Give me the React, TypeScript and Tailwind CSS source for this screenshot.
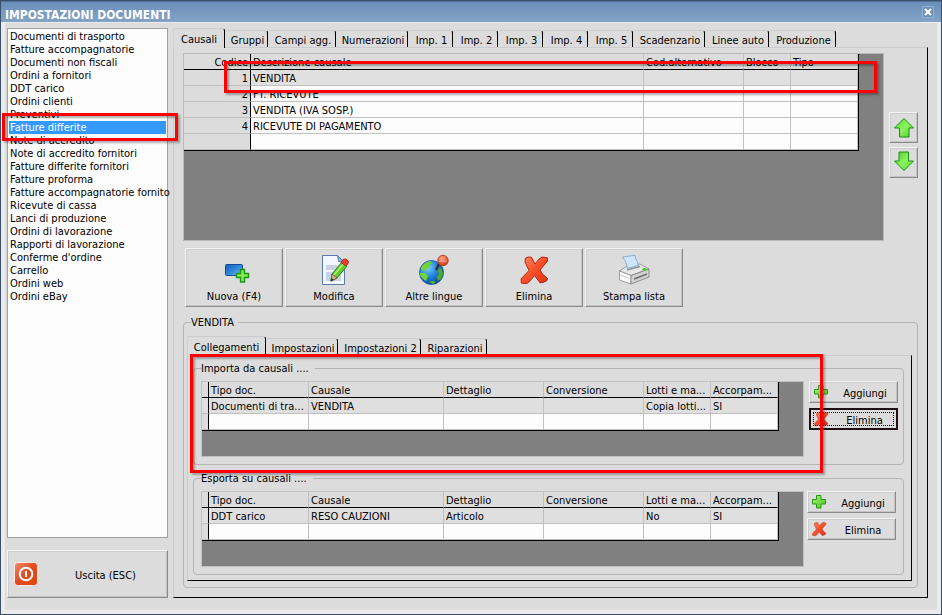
import { useState } from 'react';
import type { ReactNode } from 'react';
import { clsx } from 'clsx';

const documentTypes = [
  'Documenti di trasporto',
  'Fatture accompagnatorie',
  'Documenti non fiscali',
  'Ordini a fornitori',
  'DDT carico',
  'Ordini clienti',
  'Preventivi',
  'Fatture differite',
  'Note di accredito',
  'Note di accredito fornitori',
  'Fatture differite fornitori',
  'Fatture proforma',
  'Fatture accompagnatorie fornito',
  'Ricevute di cassa',
  'Lanci di produzione',
  'Ordini di lavorazione',
  'Rapporti di lavorazione',
  "Conferme d'ordine",
  'Carrello',
  'Ordini web',
  'Ordini eBay',
];

const mainTabs = [
  { label: 'Causali', width: 'w-[52px]' },
  { label: 'Gruppi', width: 'w-[43px]' },
  { label: 'Campi agg.', width: 'w-[68px]' },
  { label: 'Numerazioni', width: 'w-[72px]' },
  { label: 'Imp. 1', width: 'w-[45px]' },
  { label: 'Imp. 2', width: 'w-[45px]' },
  { label: 'Imp. 3', width: 'w-[45px]' },
  { label: 'Imp. 4', width: 'w-[45px]' },
  { label: 'Imp. 5', width: 'w-[45px]' },
  { label: 'Scadenzario', width: 'w-[72px]' },
  { label: 'Linee auto', width: 'w-[64px]' },
  { label: 'Produzione', width: 'w-[67px]' },
];

const detailTabs = [
  { label: 'Collegamenti', width: 'w-[79px]' },
  { label: 'Impostazioni', width: 'w-[72px]' },
  { label: 'Impostazioni 2', width: 'w-[83px]' },
  { label: 'Riparazioni', width: 'w-[66px]' },
];

const causali = [
  { code: '1', name: 'VENDITA' },
  { code: '2', name: 'FT. RICEVUTE' },
  { code: '3', name: 'VENDITA (IVA SOSP.)' },
  { code: '4', name: 'RICEVUTE DI PAGAMENTO' },
  { code: '', name: '' },
];

const linkColumns = [
  { label: 'Tipo doc.', width: 'w-[100px]' },
  { label: 'Causale', width: 'w-[135px]' },
  { label: 'Dettaglio', width: 'w-[100px]' },
  { label: 'Conversione', width: 'w-[100px]' },
  { label: 'Lotti e ma...', width: 'w-[67px]' },
  { label: 'Accorpam...', width: 'w-[67px]' },
];

const raised =
  'border border-t-[#f4f4f4] border-l-[#f4f4f4] border-r-[#8a8a8a] border-b-[#8a8a8a] bg-[#dcdcdc] shadow-[inset_1px_1px_0_#cdcdd0,inset_-1px_-1px_0_#c4c4c4]';
const cell =
  'h-4 overflow-hidden border-r border-b border-[#c0c0c0] p-0 pt-0.5 pl-0.5 text-left font-normal whitespace-nowrap';

function Highlight({ className }: { className: string }) {
  return (
    <div
      className={clsx(
        'pointer-events-none absolute z-10 border-3 border-[#ff0000] shadow-[2px_2px_2px_rgba(0,0,0,0.3),inset_2px_2px_2px_rgba(0,0,0,0.3)]',
        className,
      )}
    />
  );
}

function Tabs({
  tabs,
  label,
}: {
  tabs: { label: string; width: string }[];
  label: string;
}) {
  const [active, setActive] = useState(0);

  return (
    <div role="tablist" aria-label={label} className="flex h-5 items-end">
      {tabs.map((tab, index) => (
        <button
          key={tab.label}
          type="button"
          role="tab"
          aria-selected={index === active}
          onClick={() => setActive(index)}
          className={clsx(
            'shrink-0 rounded-t-[3px] border-t border-r border-t-[#cbcbd0] border-r-black text-center whitespace-nowrap',
            tab.width,
            index === active
              ? 'relative h-5 border-l border-l-[#d0d0d4] bg-[#dcdcdc] pt-px'
              : 'mb-px h-[17px] pt-0.5 pl-[3px]',
          )}
        >
          {tab.label}
        </button>
      ))}
    </div>
  );
}

function PlusIcon() {
  return (
    <svg viewBox="0 0 16 16" className="size-4 shrink-0">
      <defs>
        <linearGradient id="plus" x1="0" y1="0" x2="1" y2="1">
          <stop offset="0" stopColor="#b4f27c" />
          <stop offset="1" stopColor="#3fc41c" />
        </linearGradient>
      </defs>
      <path
        d="M5.500 1.500h4.500v4h4.500v4.500h-4.500v4h-4.500v-4h-4v-4.500h4z"
        fill="url(#plus)"
        stroke="#259a14"
      />
    </svg>
  );
}

function CrossIcon({ className }: { className: string }) {
  return (
    <svg viewBox="0 0 32 32" className={clsx('shrink-0', className)}>
      <defs>
        <linearGradient id="cross" x1="0" y1="0" x2="1" y2="1">
          <stop offset="0" stopColor="#ff8a5c" />
          <stop offset="0.5" stopColor="#f8502a" />
          <stop offset="1" stopColor="#dc2f10" />
        </linearGradient>
      </defs>
      <path
        d="M7.500 4l3-1 3 .3 3.500 6.700 4-5 3-2 5.500.8v3.200l-7.500 9 2.500 4 5 4.500-.5 2-4 2-3 .3-5.500-7.300-5 6-2.500 2-5.500-.3-.5-4.200 8-8.500-4-8.500z"
        fill="url(#cross)"
        stroke="#b8240c"
        strokeLinejoin="round"
      />
    </svg>
  );
}

function NewIcon() {
  return (
    <svg viewBox="0 0 32 32" className="size-8">
      <defs>
        <linearGradient id="screen" x1="0" y1="0" x2="1" y2="1">
          <stop offset="0" stopColor="#1260b8" />
          <stop offset="0.5" stopColor="#2f86dc" />
          <stop offset="1" stopColor="#8cc4f4" />
        </linearGradient>
      </defs>
      <rect x="7.500" y="10.500" width="17" height="11" rx="1" fill="url(#screen)" stroke="#174a96" />
      <path
        d="M22.500 15.500h4v4h4v4h-4v4.500h-4v-4.500h-4v-4h4z"
        fill="#8ee650"
        stroke="#139a14"
        strokeWidth="1.400"
      />
    </svg>
  );
}

function EditIcon() {
  return (
    <svg viewBox="0 0 32 32" className="size-8">
      <path d="M4.500 1.500h15l7 7v22h-22z" fill="#f4f8fe" stroke="#5a7cac" />
      <path d="M8 11h15v5H8zM8 18h15v9H8z" fill="#c6d2e8" />
      <path d="M19.500 1.500l1 6 6 1z" fill="#7fb0e4" stroke="#4a78b4" strokeWidth="0.800" />
      <path d="M14 20l10-12 5 4-10 12-6 3z" fill="#5fce2c" stroke="#2f7e18" />
      <path d="M16 21l10-12" stroke="#b4f07c" strokeWidth="1.500" />
      <path d="M14 20l5 4-6 3z" fill="#d8b888" stroke="#6b5434" strokeWidth="0.800" />
      <path d="M13.500 24l2.500 2-3.500 1.500z" fill="#333" />
      <path d="M23 8.500l2-3 3-.5 2.500 2.500-.5 2-2 2.500z" fill="#e8402c" stroke="#b02818" />
    </svg>
  );
}

function GlobeIcon() {
  return (
    <svg viewBox="0 0 32 32" className="size-8">
      <defs>
        <radialGradient id="sea" cx="0.35" cy="0.3" r="0.75">
          <stop offset="0" stopColor="#7cccf8" />
          <stop offset="0.5" stopColor="#2688dc" />
          <stop offset="1" stopColor="#0c4490" />
        </radialGradient>
        <radialGradient id="pin" cx="0.4" cy="0.3" r="0.7">
          <stop offset="0" stopColor="#ffa888" />
          <stop offset="1" stopColor="#d43a18" />
        </radialGradient>
      </defs>
      <circle cx="13.500" cy="18.500" r="12" fill="url(#sea)" stroke="#16509c" strokeWidth="0.800" />
      <path d="M3 14c2-4 6-6 9-7l2 2-3 2 1 2-4 2-1 2-4-1z" fill="#74d62c" />
      <path d="M2 19l5 0 3 3-2 5c-3-2-6-4-6-8z" fill="#74d62c" />
      <path d="M22 13l2 3 1 4-2 5-3 2-1-4 2-3-1-3z" fill="#4cae20" />
      <path d="M11 28l4-1 3 1-3 2z" fill="#5cc024" />
      <path d="M18 16l3-6" stroke="#30343a" strokeWidth="2.500" />
      <circle cx="25" cy="6.500" r="5.200" fill="url(#pin)" stroke="#a83218" strokeWidth="0.800" />
      <path d="M21 7h8" stroke="#ffc0a4" strokeWidth="0.700" />
    </svg>
  );
}

function PrinterIcon() {
  return (
    <svg viewBox="0 0 32 32" className="size-8">
      <path d="M1.500 17l7-4.500 13.500-2.500 9 5-18 6.500z" fill="#e8e8e8" stroke="#8a8a8a" strokeWidth="0.800" />
      <path d="M9 16l13-3.500" stroke="#8d9196" strokeWidth="1.500" />
      <path d="M4.500 3l12.500-1.700c0 4 3 6 3.500 10.200l-11.500 3c0-5-1.500-8-4.500-11.500z" fill="#cfe5fb" stroke="#7a9cc4" strokeWidth="0.800" />
      <path d="M1.500 17l11.500 4.500v8.500l-11.500-4z" fill="#fafafa" stroke="#8a8a8a" strokeWidth="0.800" />
      <path d="M13 21.500l18-6.500v8l-18 7z" fill="#d2d2d2" stroke="#7a7a7a" strokeWidth="0.800" />
      <path d="M16 25l13-5" stroke="#6d6d6d" strokeWidth="1.500" />
      <path d="M2 21l11 4" stroke="#c8c8c8" />
      <ellipse cx="26.500" cy="15.500" rx="2.200" ry="1.400" fill="#4cc82c" />
    </svg>
  );
}

function ArrowIcon({ down = false }: { down?: boolean }) {
  return (
    <svg viewBox="0 0 22 22" className={clsx('size-[22px]', down && 'rotate-180')}>
      <defs>
        <linearGradient id="arrow" x1="0" y1="0" x2="1" y2="1">
          <stop offset="0" stopColor="#5ed43c" />
          <stop offset="0.5" stopColor="#8af45c" />
          <stop offset="1" stopColor="#4cc82c" />
        </linearGradient>
      </defs>
      <path
        d="M11 1.500l9.500 9.500h-4.500v9H6.500v-9H1.500z"
        fill="url(#arrow)"
        stroke="#1d8c14"
        strokeLinejoin="round"
      />
    </svg>
  );
}

function PowerIcon() {
  return (
    <svg viewBox="0 0 24 24" className="size-6">
      <defs>
        <linearGradient id="power" x1="0" y1="0" x2="1" y2="1">
          <stop offset="0" stopColor="#f48c70" />
          <stop offset="0.5" stopColor="#e04a20" />
          <stop offset="1" stopColor="#dc4808" />
        </linearGradient>
      </defs>
      <rect x="0.500" y="0.500" width="23" height="23" rx="3" fill="url(#power)" stroke="#fbeae4" />
      <circle cx="12" cy="12" r="6.300" fill="none" stroke="#fff" strokeWidth="2" />
      <path d="M12 9v6" stroke="#fff" strokeWidth="2" />
    </svg>
  );
}

function ToolButton({ label, children }: { label: string; children: ReactNode }) {
  return (
    <button
      type="button"
      className={clsx('flex h-[59px] w-[98px] flex-col items-center gap-1 pt-[5px]', raised)}
    >
      {children}
      {label}
    </button>
  );
}

function CausaliTable() {
  return (
    <div className="relative h-[188px] flex-1 border border-[#b8b8b8] bg-[#808080]">
      <table className="w-[675px] table-fixed border-separate border-spacing-0 border-r border-b border-black">
        <thead className="bg-[#dcdcdc]">
          <tr>
            <th scope="col" className={clsx(cell, 'w-[67px] border-r-black border-b-black pr-0.5 text-right')}>
              Codice
            </th>
            <th scope="col" className={clsx(cell, 'w-[393px] border-b-black')}>Descrizione causale</th>
            <th scope="col" className={clsx(cell, 'w-[100px] border-b-black')}>Cod.alternativo</th>
            <th scope="col" className={clsx(cell, 'w-[47px] border-b-black')}>Blocco</th>
            <th scope="col" className={clsx(cell, 'w-[67px] border-b-black')}>Tipo</th>
          </tr>
        </thead>
        <tbody>
          {causali.map((row, index) => (
            <tr key={index} className={index === 0 ? 'bg-[#e0e0e0]' : 'bg-[#fcfcfc]'}>
              <th scope="row" className={clsx(cell, 'border-r-black bg-[#dcdcdc] pr-0.5 text-right')}>
                {row.code}
              </th>
              <td className={cell}>{row.name}</td>
              <td className={cell} />
              <td className={cell} />
              <td className={cell} />
            </tr>
          ))}
        </tbody>
      </table>
      <Highlight className="top-[7px] left-10 h-8 w-[653px]" />
    </div>
  );
}

function LinksTable({ row }: { row: string[] }) {
  return (
    <div className="h-[76px] flex-1 border border-[#c0c0c0] bg-[#808080]">
      <table className="w-[577px] table-fixed border-separate border-spacing-0 border-r border-b border-black">
        <thead className="bg-[#dcdcdc]">
          <tr>
            <td className={clsx(cell, 'w-[7px] border-r-black border-b-black')} />
            {linkColumns.map((column) => (
              <th key={column.label} scope="col" className={clsx(cell, column.width, 'border-b-black')}>
                {column.label}
              </th>
            ))}
          </tr>
        </thead>
        <tbody>
          <tr className="bg-[#e0dfe0]">
            <td className={clsx(cell, 'border-r-black')} />
            {row.map((value, index) => (
              <td key={index} className={cell}>{value}</td>
            ))}
          </tr>
          <tr className="bg-[#fcfcfc]">
            <td className={clsx(cell, 'border-r-black bg-[#dcdcdc]')} />
            {row.map((_, index) => (
              <td key={index} className={cell} />
            ))}
          </tr>
        </tbody>
      </table>
    </div>
  );
}

function LinksGroup({
  title,
  row,
  focused = false,
}: {
  title: string;
  row: string[];
  focused?: boolean;
}) {
  return (
    <fieldset className="relative min-w-0 rounded-[4px] border border-[#b4b4b4] px-[7px] pb-[7px]">
      <legend className="h-3.5 pr-1.5 leading-4">{title}</legend>
      <div className={clsx('flex pt-1.5', focused ? '-mr-0.5 gap-[5px]' : 'gap-[3px]')}>
        <LinksTable row={row} />
        <div className="flex w-[89px] flex-col gap-[5px]">
          <button type="button" className={clsx('flex h-[22px] items-center pl-[3px]', raised)}>
            <PlusIcon />
            <span className="flex-1 pt-0.5 pl-1">Aggiungi</span>
          </button>
          <button
            type="button"
            className={clsx(
              'relative flex h-[22px] items-center',
              focused ? 'border-2 border-[#1c1014] bg-[#dcdcdc] pl-0.5' : ['pl-[3px]', raised],
            )}
          >
            <CrossIcon className="size-4" />
            <span className="flex-1 pt-0.5 pl-1">Elimina</span>
            {focused && <span className="absolute inset-0.5 border border-dotted border-black" />}
          </button>
        </div>
      </div>
      {focused && <Highlight className="-top-[21px] -left-1 h-[119px] w-[633px]" />}
    </fieldset>
  );
}

function Sidebar() {
  const [selected, setSelected] = useState('Fatture differite');

  return (
    <div className="flex w-[161px] shrink-0 flex-col gap-3 pt-[5px]">
      <ul className="flex-1 border border-[#a0a0a0] bg-[#fcfcfc] p-px">
        {documentTypes.map((name) => (
          <li key={name} className="relative">
            <button
              type="button"
              aria-pressed={name === selected}
              onClick={() => setSelected(name)}
              className={clsx(
                'block h-[13px] w-full pl-px text-left whitespace-nowrap',
                name === selected && 'bg-[#3399ff] text-white',
              )}
            >
              {name}
            </button>
            {name === 'Fatture differite' && (
              <Highlight className="-top-2 -left-[7px] h-7 w-44" />
            )}
          </li>
        ))}
      </ul>
      <button type="button" className={clsx('flex h-12 items-center pl-1.5', raised)}>
        <PowerIcon />
        <span className="flex-1 pt-0.5 pr-1.5 pl-3">Uscita (ESC)</span>
      </button>
    </div>
  );
}

export default function App() {
  return (
    <div className="flex min-h-screen flex-col border border-[#3a4f68] bg-[#dcdcdc] font-['Tahoma','DejaVu_Sans_Condensed','DejaVu_Sans',sans-serif] text-[11px] leading-[13px] text-black">
      <header className="flex h-[21px] items-center justify-between border-t border-[#4f719a] bg-linear-to-b from-[#6a8fba] to-[#84a3c6] pr-[7px] pl-1 text-white">
        <h1 className="pt-1.5 text-[12px] font-bold">IMPOSTAZIONI DOCUMENTI</h1>
        <button
          type="button"
          aria-label="Chiudi"
          className="flex size-3 items-center justify-center border border-[#8fb0d0] bg-[#6f92b4]"
        >
          <svg viewBox="0 0 8 8" className="size-2 shrink-0">
            <path d="M1 1l6 6M7 1l-6 6" stroke="#fff" strokeWidth="2" />
          </svg>
        </button>
      </header>

      <main className="flex flex-1 gap-[5px] border-x-4 border-t border-b-4 border-[#ebebee] pb-3 pl-0.5 pr-[9px]">
        <Sidebar />

        <div className="flex min-w-0 flex-1 flex-col pt-[5px]">
          <Tabs tabs={mainTabs} label="Impostazioni documenti" />
          <section className="-mt-px flex-1 border border-t-[#cbcbd0] border-r-black border-b-black border-l-[#cbcbd0] px-[9px] pt-[5px] pb-[9px]">
            <div className="flex gap-[5px]">
              <CausaliTable />
              <div className="flex w-[29px] flex-col gap-1 pt-[59px]">
                <button type="button" aria-label="Sposta su" className={clsx('flex h-[31px] items-center justify-center', raised)}>
                  <ArrowIcon />
                </button>
                <button type="button" aria-label="Sposta giù" className={clsx('flex h-[31px] justify-center pt-0.5', raised)}>
                  <ArrowIcon down />
                </button>
              </div>
            </div>

            <div className="mt-[7px] flex gap-0.5 pl-0.5">
              <ToolButton label="Nuova (F4)">
                <NewIcon />
              </ToolButton>
              <ToolButton label="Modifica">
                <EditIcon />
              </ToolButton>
              <ToolButton label="Altre lingue">
                <GlobeIcon />
              </ToolButton>
              <ToolButton label="Elimina">
                <CrossIcon className="size-8" />
              </ToolButton>
              <ToolButton label="Stampa lista">
                <PrinterIcon />
              </ToolButton>
            </div>

            <fieldset className="mt-2 min-w-0 rounded-[4px] border border-[#b4b4b4] pr-[5px] pb-1.5 pl-[3px]">
              <legend className="ml-1 h-3.5 pr-1 leading-4">VENDITA</legend>
              <div className="pt-[7px]">
                <Tabs tabs={detailTabs} label="Dettaglio causale" />
                <div className="-mt-px flex flex-col gap-1.5 border border-t-[#cbcbd0] border-r-black border-b-black border-l-[#cbcbd0] pt-[5px] pr-[7px] pb-[5px] pl-[5px]">
                  <LinksGroup
                    title="Importa da causali ...."
                    row={['Documenti di tra...', 'VENDITA', '', '', 'Copia lotti...', 'SI']}
                    focused
                  />
                  <LinksGroup
                    title="Esporta su causali ...."
                    row={['DDT carico', 'RESO CAUZIONI', 'Articolo', '', 'No', 'SI']}
                  />
                </div>
              </div>
            </fieldset>
          </section>
        </div>
      </main>
    </div>
  );
}
